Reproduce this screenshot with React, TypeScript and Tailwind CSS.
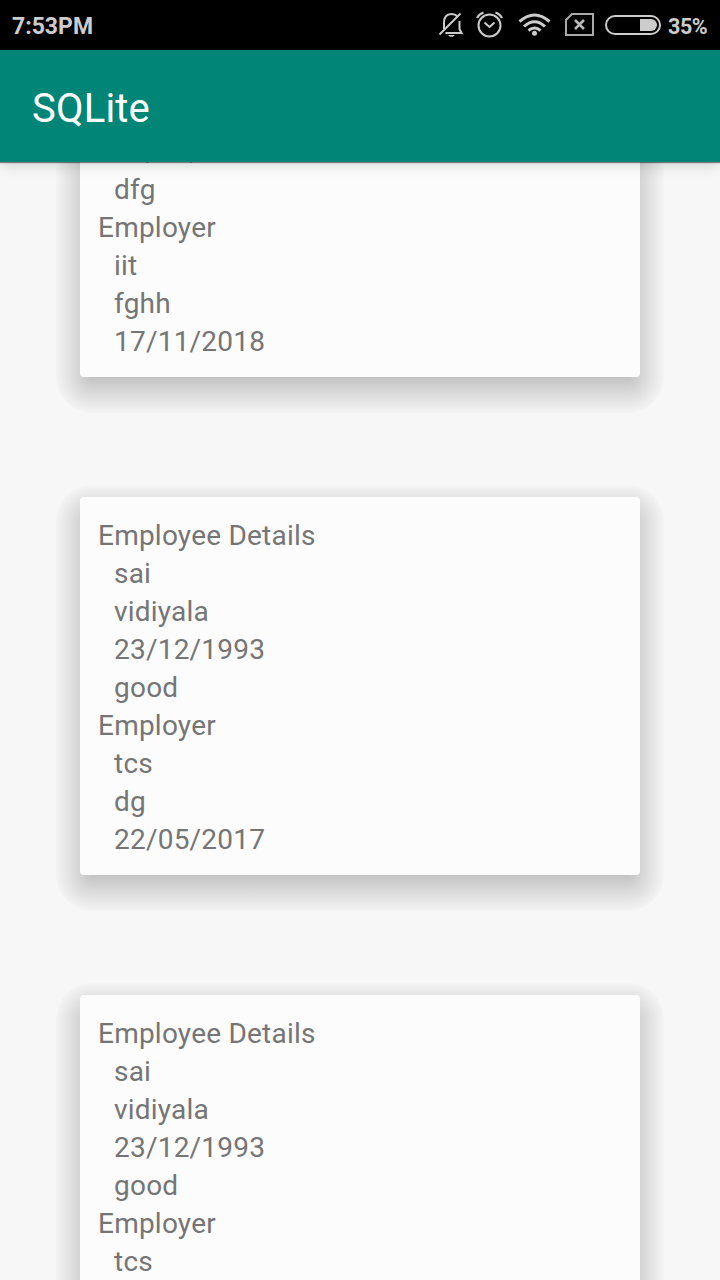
import React from "react";

type Employee = { title?: string; details: string[]; employer: string[] };

const employees: Employee[] = [
  { details: ["17/11/1993", "dfg"], employer: ["iit", "fghh", "17/11/2018"] },
  { title: "Employee Details", details: ["sai", "vidiyala", "23/12/1993", "good"], employer: ["tcs", "dg", "22/05/2017"] },
  { title: "Employee Details", details: ["sai", "vidiyala", "23/12/1993", "good"], employer: ["tcs"] },
];

function CardShadow() {
  return (
    <div className="absolute -inset-x-6 -top-3 -bottom-9 grid grid-cols-[36px_1fr_36px] grid-rows-[36px_1fr_36px] [--e:rgba(0,0,0,0.01)] [--m:rgba(0,0,0,0.14)] [--c:rgba(0,0,0,0.21)]">
      <div className="bg-[radial-gradient(circle_at_100%_100%,var(--c)_0,var(--m)_12px,var(--e)_36px,transparent_36px)]" />
      <div className="bg-[linear-gradient(to_top,var(--c)_0,var(--m)_12px,var(--e)_36px)]" />
      <div className="bg-[radial-gradient(circle_at_0_100%,var(--c)_0,var(--m)_12px,var(--e)_36px,transparent_36px)]" />
      <div className="bg-[linear-gradient(to_left,var(--c)_0,var(--m)_12px,var(--e)_36px)]" />
      <div />
      <div className="bg-[linear-gradient(to_right,var(--c)_0,var(--m)_12px,var(--e)_36px)]" />
      <div className="bg-[radial-gradient(circle_at_100%_0,var(--c)_0,var(--m)_12px,var(--e)_36px,transparent_36px)]" />
      <div className="bg-[linear-gradient(to_bottom,var(--c)_0,var(--m)_12px,var(--e)_36px)]" />
      <div className="bg-[radial-gradient(circle_at_0_0,var(--c)_0,var(--m)_12px,var(--e)_36px,transparent_36px)]" />
    </div>
  );
}

function EmployeeCard({ employee }: { employee: Employee }) {
  return (
    <section className="relative shrink-0">
      <CardShadow />
      <div className="relative rounded-[4px] bg-[#fcfcfc] px-[18px] pt-5 pb-4 text-[28px] leading-[38px] tracking-[0.22px] text-[#757575]">
        {employee.title && <p>{employee.title}</p>}
        {employee.details.map((line) => (
          <p key={line} className="pl-4">{line}</p>
        ))}
        <p>Employer</p>
        {employee.employer.map((line) => (
          <p key={line} className="pl-4">{line}</p>
        ))}
      </div>
    </section>
  );
}

function StatusBar() {
  return (
    <div className="flex h-[50px] shrink-0 items-center bg-black pr-3 pl-3 text-[#cccccc]">
      <span className="pt-[3px] text-[23px] leading-[28px] font-bold">7:53PM</span>
      <svg className="ml-auto h-[50px] w-[230px] shrink-0" viewBox="435 0 230 50" fill="none" stroke="#cccccc" strokeWidth="2">
        <path d="M444 29V23C444 17 447 14 451.500 14C454 14 456 14.800 457.500 16.500M459.500 21V29L461.500 33H445.500M439.500 34.500L460.500 13.500" />
        <path d="M448 35H455L453 36.800H450Z" fill="#cccccc" stroke="none" />
        <circle cx="489.500" cy="25.500" r="11" />
        <path d="M484.500 22.500L489.500 27L494.500 22.500" />
        <path d="M477 18Q479 14 483.500 12.500M502 18Q500 14 495.500 12.500" />
        <path d="M519.500 21.500Q534.500 8.500 549.500 21.500M524 26.500Q534.500 17 545 26.500M528.500 30.500Q534.500 25.500 540.500 30.500" strokeWidth="3" />
        <circle cx="534.500" cy="33.300" r="2.500" fill="#cccccc" stroke="none" />
        <path d="M572 14H593V35H566V20Z" stroke="#aaaaaa" />
        <path d="M575 20L584 29M584 20L575 29" stroke="#bbbbbb" strokeWidth="2.500" />
        <rect x="606" y="16" width="54" height="18" rx="9" />
        <path d="M640 19H651A6 6 0 0 1 651 31H640Z" fill="#cccccc" stroke="none" />
      </svg>
      <span className="ml-[3px] w-10 pt-[3px] text-[21.500px] leading-[28px] font-bold tracking-[-0.4px] whitespace-nowrap">35%</span>
    </div>
  );
}

export default function App() {
  return (
    <div className="flex h-[1280px] w-[720px] flex-col overflow-hidden bg-[#f7f7f7] font-[Roboto,sans-serif]">
      <StatusBar />
      <header className="relative z-10 flex h-28 shrink-0 items-center bg-[#008577] pt-1.5 pl-8 shadow-[0_1px_1px_rgba(0,0,0,0.45),0_4px_12px_rgba(0,0,0,0.14)]">
        <h1 className="text-[40px] leading-[48px] tracking-[0.2px] text-white">SQLite</h1>
      </header>
      <main className="min-h-0 flex-1 overflow-hidden px-20">
        <div className="-mt-[49px] flex flex-col gap-[120px]">
          {employees.map((employee, index) => (
            <EmployeeCard key={index} employee={employee} />
          ))}
        </div>
      </main>
    </div>
  );
}
